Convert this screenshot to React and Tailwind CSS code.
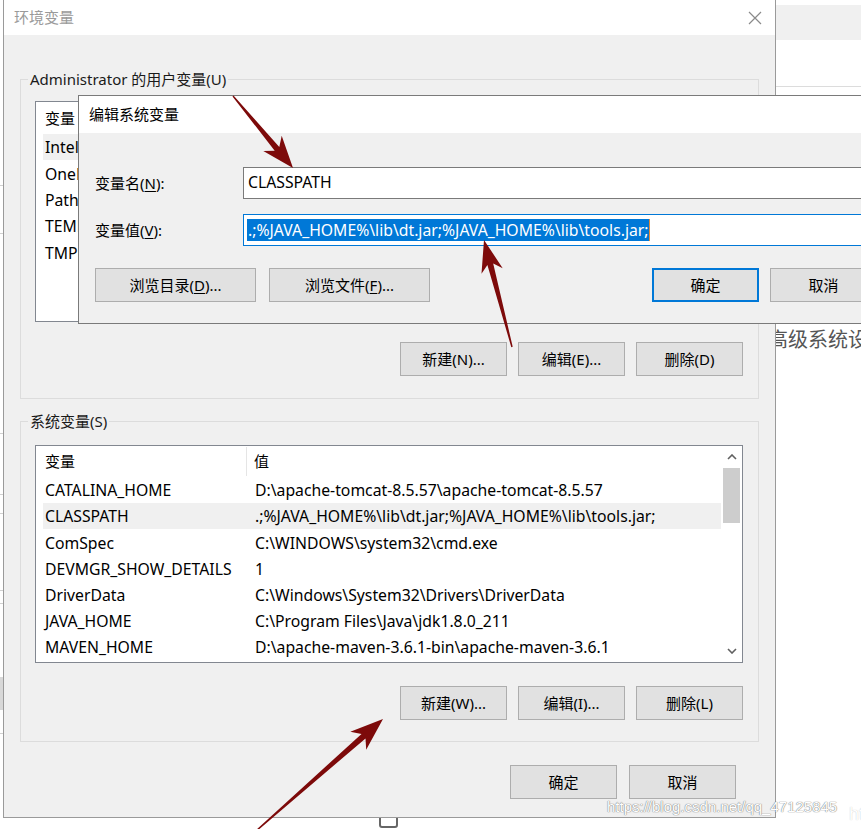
import React from "react";

function Btn({ children, className = "" }) {
  return (
    <div
      className={`flex items-center justify-center h-[34px] shrink-0 bg-[#e1e1e1] text-[15px] text-black whitespace-nowrap ${className}`}
    >
      {children}
    </div>
  );
}

function arrowPoints(tx, ty, hx, hy, headLen, headW, shaftW) {
  const dx = hx - tx;
  const dy = hy - ty;
  const L = Math.hypot(dx, dy);
  const ux = dx / L;
  const uy = dy / L;
  const nx = -uy;
  const ny = ux;
  const bx = hx - ux * headLen;
  const by = hy - uy * headLen;
  const kx = bx + ux * 7;
  const ky = by + uy * 7;
  const pts = [
    [tx + nx * 0.7, ty + ny * 0.7],
    [kx + (nx * shaftW) / 2, ky + (ny * shaftW) / 2],
    [bx + (nx * headW) / 2, by + (ny * headW) / 2],
    [hx, hy],
    [bx - (nx * headW) / 2, by - (ny * headW) / 2],
    [kx - (nx * shaftW) / 2, ky - (ny * shaftW) / 2],
    [tx - nx * 0.7, ty - ny * 0.7],
  ];
  return pts.map((p) => p.map((v) => v.toFixed(1)).join(",")).join(" ");
}

const sysRows = [
  ["CATALINA_HOME", "D:\\apache-tomcat-8.5.57\\apache-tomcat-8.5.57"],
  ["CLASSPATH", ".;%JAVA_HOME%\\lib\\dt.jar;%JAVA_HOME%\\lib\\tools.jar;"],
  ["ComSpec", "C:\\WINDOWS\\system32\\cmd.exe"],
  ["DEVMGR_SHOW_DETAILS", "1"],
  ["DriverData", "C:\\Windows\\System32\\Drivers\\DriverData"],
  ["JAVA_HOME", "C:\\Program Files\\Java\\jdk1.8.0_211"],
  ["MAVEN_HOME", "D:\\apache-maven-3.6.1-bin\\apache-maven-3.6.1"],
];

const userRows = ["IntelliJ IDEA", "OneDrive", "Path", "TEMP", "TMP"];

export default function App() {
  return (
    <div className="relative w-[861px] h-[829px] bg-white overflow-hidden [font-family:'Noto_Sans','Noto_Sans_CJK_SC',sans-serif] text-black">
      {/* background window at left edge */}
      <div className="absolute left-0 top-0 w-[3px] h-[829px] bg-white">
        <div className="absolute left-0 top-[185px] w-[3px] h-px bg-[#d0d0d0]" />
        <div className="absolute left-0 top-[233px] w-[3px] h-px bg-[#d0d0d0]" />
        <div className="absolute left-0 top-[433px] w-[3px] h-px bg-[#d0d0d0]" />
        <div className="absolute left-0 top-[494px] w-[3px] h-px bg-[#d0d0d0]" />
        <div className="absolute left-0 top-[513px] w-[3px] h-px bg-[#d0d0d0]" />
        <div className="absolute left-0 top-[590px] w-[3px] h-px bg-[#d0d0d0]" />
        <div className="absolute left-0 top-[603px] w-[3px] h-px bg-[#d0d0d0]" />
        <div className="absolute left-0 top-[677px] w-[3px] h-[33px] bg-[#d8d8d8]" />
        <div className="absolute left-0 top-[733px] w-[3px] h-px bg-[#d0d0d0]" />
      </div>

      {/* background window at right */}
      <div className="absolute left-[760px] top-0 w-[101px] h-[829px] bg-white flex flex-col">
        <div className="h-[5px] shrink-0" />
        <div className="h-[35px] shrink-0 bg-[#f0f0f0]" />
        <div className="h-[46px] shrink-0" />
        <div className="h-px shrink-0 bg-[#dcdcdc]" />
        <div className="mt-[239px] pl-[8px] text-[20px] leading-[28px] text-[#555] whitespace-nowrap">
          高级系统设置
        </div>
      </div>

      {/* small icon below dialog */}
      <div className="absolute left-[379px] top-[808px] w-[19px] h-[20px] border-2 border-[#666] rounded-[3px] bg-white" />

      {/* main dialog */}
      <div className="absolute left-[3px] top-0 w-[773px] h-[818px] bg-[#f0f0f0] border-x border-b border-[#9a9a9a] flex flex-col">
        <div className="h-[35px] shrink-0 bg-white flex items-center justify-between pl-[10px] pr-[13px]">
          <span className="text-[15px] text-[#9a9a9a]">环境变量</span>
          <svg width="14" height="14" viewBox="0 0 14 14">
            <path d="M1 1 L13 13 M13 1 L1 13" stroke="#8a8a8a" strokeWidth="1.2" fill="none" />
          </svg>
        </div>

        <div className="flex flex-col px-[16px]">
          {/* user variables group */}
          <fieldset className="mt-[34px] border border-[#dcdcdc] pl-[14px] pr-[15px] pb-[22px]">
            <legend className="ml-[-7px] px-[2px] text-[15px] leading-[20px] text-[#1a1a1a]">
              Administrator 的用户变量(U)
            </legend>
            <div className="mt-[12px] h-[221px] bg-white border border-[#828790] flex flex-col pl-[7px] overflow-hidden">
              <div className="h-[32px] shrink-0 flex items-center pl-[2px] text-[15px]">变量</div>
              {userRows.map((r, i) => (
                <div
                  key={r}
                  className={`h-[26.3px] shrink-0 flex items-center pl-[2px] pt-[2px] text-[15.75px] whitespace-nowrap ${
                    i === 0 ? "bg-[#f0f0f0]" : ""
                  }`}
                >
                  {r}
                </div>
              ))}
            </div>
            <div className="mt-[20px] flex justify-end gap-[11px]">
              <Btn className="w-[107px] border border-[#adadad]">新建(N)...</Btn>
              <Btn className="w-[107px] border border-[#adadad]">编辑(E)...</Btn>
              <Btn className="w-[107px] border border-[#adadad]">删除(D)</Btn>
            </div>
          </fieldset>

          {/* system variables group */}
          <fieldset className="mt-[12px] border border-[#dcdcdc] pl-[14px] pr-[15px] pb-[21px]">
            <legend className="ml-[-7px] px-[2px] text-[15px] leading-[20px] text-[#1a1a1a]">系统变量(S)</legend>
            <div className="mt-[14px] h-[218px] bg-white border border-[#828790] flex overflow-hidden">
              <div className="flex-1 flex flex-col pl-[7px] overflow-hidden">
                <div className="h-[31px] shrink-0 flex items-center text-[15px]">
                  <div className="w-[204px] h-[29px] flex items-center pl-[2px] border-r border-[#e5e5e5]">变量</div>
                  <div className="pl-[7px]">值</div>
                </div>
                {sysRows.map(([n, v], i) => (
                  <div
                    key={n}
                    className={`h-[26.17px] shrink-0 flex items-center pt-[2px] text-[15.75px] whitespace-nowrap ${
                      i === 1 ? "bg-[#f0f0f0]" : ""
                    }`}
                  >
                    <div className="w-[210px] shrink-0 pl-[2px]">{n}</div>
                    <div className="pl-[2px]">{v}</div>
                  </div>
                ))}
              </div>
              <div className="w-[21px] shrink-0 flex flex-col items-center bg-white">
                <div className="h-[22px] shrink-0 flex items-center justify-center">
                  <svg width="10" height="6" viewBox="0 0 10 6">
                    <path d="M1 5 L5 1 L9 5" stroke="#606060" strokeWidth="1.6" fill="none" />
                  </svg>
                </div>
                <div className="w-[17px] h-[55px] shrink-0 bg-[#cdcdcd]" />
                <div className="flex-1" />
                <div className="h-[22px] shrink-0 flex items-center justify-center">
                  <svg width="10" height="6" viewBox="0 0 10 6">
                    <path d="M1 1 L5 5 L9 1" stroke="#606060" strokeWidth="1.6" fill="none" />
                  </svg>
                </div>
              </div>
            </div>
            <div className="mt-[23px] flex justify-end gap-[11px]">
              <Btn className="w-[107px] border border-[#adadad]">新建(W)...</Btn>
              <Btn className="w-[107px] border border-[#adadad]">编辑(I)...</Btn>
              <Btn className="w-[107px] border border-[#adadad]">删除(L)</Btn>
            </div>
          </fieldset>

          <div className="mt-[23px] pr-[23px] flex justify-end gap-[12px]">
            <Btn className="w-[107px] border border-[#adadad]">确定</Btn>
            <Btn className="w-[107px] border border-[#adadad]">取消</Btn>
          </div>
        </div>
      </div>

      {/* edit dialog */}
      <div className="absolute left-[78px] top-[95px] w-[800px] h-[229px] bg-[#f0f0f0] border border-[#7a7a7a] flex flex-col">
        <div className="h-[37px] shrink-0 bg-white flex items-center pl-[10px] text-[15px]">编辑系统变量</div>
        <div className="flex flex-col pt-[34px] pl-[16px]">
          <div className="h-[32px] flex items-center">
            <div className="w-[148px] shrink-0 text-[15px]">
              变量名(<span className="underline underline-offset-2">N</span>):
            </div>
            <div className="flex-1 h-full bg-white border border-[#7a7a7a] flex items-center pl-[4px] text-[15.75px]">
              CLASSPATH
            </div>
          </div>
          <div className="mt-[15px] h-[32px] flex items-center">
            <div className="w-[148px] shrink-0 text-[15px]">
              变量值(<span className="underline underline-offset-2">V</span>):
            </div>
            <div className="flex-1 h-full bg-white border border-[#0078d7] flex items-center pl-[3px] text-[15.75px]">
              <span className="bg-[#0078d7] text-white leading-[22px] pl-[1px] whitespace-nowrap">
                .;%JAVA_HOME%\lib\dt.jar;%JAVA_HOME%\lib\tools.jar;
              </span>
              <span className="w-[1px] h-[22px] bg-[#e08a3a]" />
            </div>
          </div>
          <div className="mt-[22px] flex items-center">
            <Btn className="w-[161px] border border-[#adadad]">
              浏览目录(<span className="underline underline-offset-2">D</span>)...
            </Btn>
            <Btn className="ml-[13px] w-[161px] border border-[#adadad]">
              浏览文件(<span className="underline underline-offset-2">F</span>)...
            </Btn>
            <Btn className="ml-auto w-[107px] border-2 border-[#0078d7]">确定</Btn>
            <Btn className="ml-[11px] w-[107px] border border-[#adadad]">取消</Btn>
          </div>
        </div>
      </div>

      {/* annotation arrows */}
      <svg className="absolute left-0 top-0 pointer-events-none" width="861" height="829" viewBox="0 0 861 829">
        <polygon points={arrowPoints(233, 96, 293, 168, 32, 24, 6)} fill="#7d0a0a" />
        <polygon points={arrowPoints(512, 347, 484, 240, 32, 22, 6)} fill="#7d0a0a" />
        <polygon points={arrowPoints(256, 831, 383, 719, 33, 24, 6)} fill="#7d0a0a" />
      </svg>

      {/* watermark */}
      <div className="absolute left-[607px] top-[797px] text-[15px] leading-[20px] text-white whitespace-nowrap [font-family:'Liberation_Sans',Arial,sans-serif] [text-shadow:0_0_1px_#777,0_0_1px_#777]">
        https://blog.csdn.net/qq_47125845
      </div>
      <div className="absolute left-[849px] top-[803px] text-[18px] leading-[22px] text-white whitespace-nowrap [font-family:'Liberation_Sans',Arial,sans-serif] [text-shadow:0_0_1px_#bbb]">
        https://
      </div>
    </div>
  );
}
